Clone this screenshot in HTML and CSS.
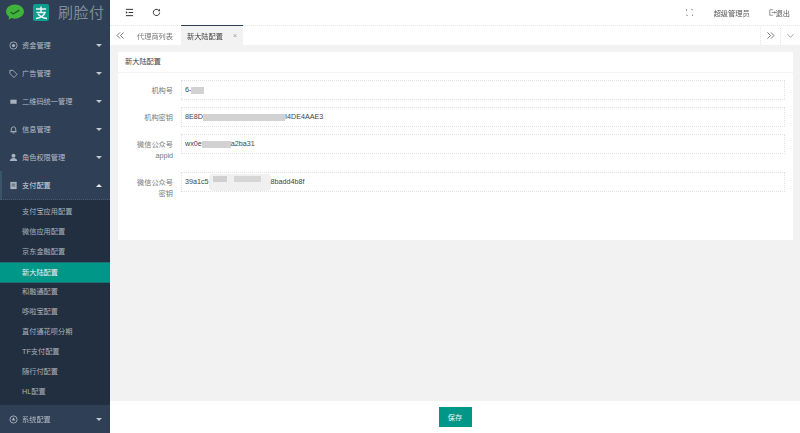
FILE: index.html
```html
<!DOCTYPE html>
<html lang="zh">
<head>
<meta charset="utf-8">
<title>刷脸付</title>
<link rel="stylesheet" href="styles.css">
</head>
<body>
<div class="app">
  <aside class="side">
    <div class="logo">
      <svg class="lg-wx" viewBox="0 0 20 18"><path d="M10 0.500C4.800 0.500 0.500 3.800 0.500 8c0 2.300 1.300 4.300 3.300 5.700L3 16.800l3.500-1.900c1.100.4 2.300.6 3.500.6 5.200 0 9.500-3.400 9.500-7.500S15.200.5 10 .5z" fill="#3fb33a"/><path d="M5.500 8.500l2.500 2 6.500-4" fill="none" stroke="#1e5a2a" stroke-width="1.300"/></svg>
      <svg class="lg-ali" viewBox="0 0 16 17"><rect width="16" height="17" rx="2" fill="#0f9d8f"/><path d="M3 5h10M8 2.500V8M3.500 8.500h8.500c-1 3-4.500 5.500-9 6M5 10c2 2.500 5 4 9 4.500" fill="none" stroke="#e8f6f4" stroke-width="1.500"/></svg>
      <span class="lg-text">刷脸付</span>
    </div>
    <nav class="menu">
      <a class="mi"><svg class="ic" viewBox="0 0 10 10"><circle cx="5" cy="5" r="4" fill="none" stroke="currentColor"/><circle cx="5" cy="5" r="1.800" fill="currentColor"/></svg><span>资金管理</span><i class="car"></i></a>
      <a class="mi"><svg class="ic" viewBox="0 0 10 10"><path d="M1 1.500h3.500l4.500 4.500-3.500 3.500L1 5z" fill="none" stroke="currentColor"/></svg><span>广告管理</span><i class="car"></i></a>
      <a class="mi"><svg class="ic" viewBox="0 0 10 10"><rect x="1.500" y="3" width="7" height="4.500" fill="currentColor"/></svg><span>二维码统一管理</span><i class="car"></i></a>
      <a class="mi"><svg class="ic" viewBox="0 0 10 10"><path d="M2.500 7.500V4.500a2.500 2.500 0 0 1 5 0v3zM1.500 7.500h7M4.200 9h1.600" fill="none" stroke="currentColor"/></svg><span>信息管理</span><i class="car"></i></a>
      <a class="mi"><svg class="ic" viewBox="0 0 10 10"><circle cx="5" cy="3" r="2.200" fill="currentColor"/><path d="M.8 9c.3-2.500 2-3.500 4.200-3.500S8.900 6.500 9.200 9z" fill="currentColor"/></svg><span>角色权限管理</span><i class="car"></i></a>
      <a class="mi open"><svg class="ic" viewBox="0 0 10 10"><rect x="1.500" y="1" width="7" height="8" fill="currentColor"/><path d="M3 3.500h4M3 5.500h4" stroke="#2f4056" stroke-width=".8"/></svg><span>支付配置</span><i class="car up"></i></a>
      <div class="sub">
        <a class="si">支付宝应用配置</a>
        <a class="si">微信应用配置</a>
        <a class="si">京东金融配置</a>
        <a class="si on">新大陆配置</a>
        <a class="si">和融通配置</a>
        <a class="si">哆啦宝配置</a>
        <a class="si">直付通花呗分期</a>
        <a class="si">TF支付配置</a>
        <a class="si">随行付配置</a>
        <a class="si">HL配置</a>
      </div>
      <a class="mi"><svg class="ic" viewBox="0 0 10 10"><circle cx="5" cy="5" r="4" fill="none" stroke="currentColor"/><path d="M5 2.500L7 6H3z" fill="currentColor"/></svg><span>系统配置</span><i class="car"></i></a>
    </nav>
  </aside>
  <main class="main">
    <header class="top">
      <div class="top-l">
        <svg class="ti" viewBox="0 0 10 10"><path d="M1 1.500h8M4 5h5M1 8.500h8" stroke="#333" stroke-width="1.100"/><path d="M1 3.500L3 5 1 6.500z" fill="#333"/></svg>
        <svg class="ti" viewBox="0 0 10 10"><path d="M8.500 5a3.500 3.500 0 1 1-1.200-2.700" fill="none" stroke="#333" stroke-width="1.100"/><path d="M8.800 0.800v2.700H6.100z" fill="#333"/></svg>
      </div>
      <div class="top-r">
        <svg class="fs" viewBox="0 0 8 8"><path d="M0 2.500V0.500H2M6 .5h2v2M8 5.500v2H6M2 7.500H0v-2" fill="none" stroke="#666" stroke-width=".9" stroke-dasharray="1.200 .8"/></svg>
        <span class="admin">超级管理员</span>
        <span class="logout"><svg class="lo" viewBox="0 0 9 9"><path d="M5 1H1v7h4M3.500 4.500H8.500M7 3l1.500 1.500L7 6" fill="none" stroke="#555" stroke-width=".8"/></svg>退出</span>
      </div>
    </header>
    <div class="tabs">
      <span class="tb-btn left"><svg class="ch" viewBox="0 0 10 8"><path d="M4.500.5L1 4l3.500 3.500M8.500.5L5 4l3.500 3.500" fill="none" stroke="#555" stroke-width=".9"/></svg></span>
      <span class="tab">代理商列表</span>
      <span class="tab cur">新大陆配置<em class="x">×</em></span>
      <span class="tb-fill"></span>
      <span class="tb-btn"><svg class="ch" viewBox="0 0 10 8"><path d="M1.500.5L5 4 1.500 7.500M5.500.5L9 4 5.500 7.500" fill="none" stroke="#555" stroke-width=".9"/></svg></span>
      <span class="tb-btn"><svg class="ch" viewBox="0 0 10 8"><path d="M1.500 2.500L5 6l3.500-3.500" fill="none" stroke="#777" stroke-width=".8"/></svg></span>
    </div>
    <section class="body">
      <div class="card">
        <h2 class="card-h">新大陆配置</h2>
        <form class="form">
          <div class="row"><label class="lb">机构号</label><div class="inp">6-<b class="blur w1"></b></div></div>
          <div class="row"><label class="lb">机构密钥</label><div class="inp">8E8D<b class="blur w2"></b>I4DE4AAE3</div></div>
          <div class="row"><label class="lb">微信公众号<br>appid</label><div class="inp">wx0e<b class="blur w3"></b>a2ba31</div></div>
          <div class="row"><label class="lb">微信公众号<br>密钥</label><div class="inp">39a1c5<b class="blur w4"></b>8badd4b8f</div></div>
        </form>
      </div>
    </section>
    <footer class="foot"><button class="save" type="button">保存</button></footer>
  </main>
</div>
</body>
</html>
```
FILE: styles.css
```css
* { box-sizing: border-box; }
html, body { margin: 0; height: 100%; }
body { font-family: "Liberation Sans", "Noto Sans CJK SC", sans-serif; font-size: 7.2px; color: #555; overflow: hidden; background: #fff; }
.app { display: flex; width: 800px; height: 433px; filter: blur(.3px); }

.side { width: 110px; flex: none; background: #2f3f55; color: #b4bcc6; display: flex; flex-direction: column; }
.logo { height: 31px; flex: none; display: flex; align-items: flex-start; padding: 4px 0 0 5px; }
.lg-wx { width: 20px; height: 17px; }
.lg-ali { width: 16px; height: 17px; margin-left: 8px; }
.lg-text { margin-left: 9px; font-size: 15px; line-height: 17px; color: #7f8b99; letter-spacing: .5px; }

.menu { display: flex; flex-direction: column; flex: 1; }
.mi { height: 28px; flex: none; display: flex; align-items: center; padding: 0 6px 0 9px; }
.mi span { flex: 1; margin-left: 4px; }
.mi.open { color: #d5d9df; height: 29px; border-bottom: 1px dotted #4a5868; box-shadow: inset 2px 0 0 #3a5565; }
.ic { width: 9px; height: 9px; flex: none; color: #aab2bd; }
.car { width: 0; height: 0; border: 3px solid transparent; border-top: 3px solid #c2c8d0; border-bottom: 0; margin-right: 2px; }
.car.up { border-top: 0; border-bottom: 3px solid #e8eaee; }
.sub { background: #222f40; display: flex; flex-direction: column; height: 205px; padding-top: 2px; flex: none; }
.si { height: 20px; line-height: 20px; padding-left: 22px; color: #aab2bd; flex: none; }
.si.on { background: #009688; color: #eef; height: 21px; border-top: 1px solid #1c6f70; border-bottom: 1px solid #1c6f70; line-height: 19px; margin-bottom: -1px; }

.main { flex: 1; min-width: 0; display: flex; flex-direction: column; }
.top { height: 25px; flex: none; display: flex; align-items: center; justify-content: space-between; padding: 0 10px 0 15px; background: #fff; }
.top-l { display: flex; gap: 18px; }
.ti { width: 9px; height: 9px; }
.top-r { display: flex; align-items: center; }
.fs { width: 7px; height: 7px; margin-right: 21px; }
.admin { color: #555; margin-right: 19px; }
.logout { display: flex; align-items: center; color: #555; }
.lo { width: 7px; height: 7px; }

.tabs { height: 20px; flex: none; display: flex; align-items: stretch; background: #fff; border-top: 1px dotted #e8e8e8; }
.tb-btn { width: 20px; display: flex; align-items: center; justify-content: center; border-left: 1px dotted #e8e8e8; }
.tb-btn.left { width: 20px; border-left: 0; }
.ch { width: 9px; height: 7px; }
.tab { padding: 0 8px 0 7px; display: flex; align-items: center; color: #777; }
.tab.cur { background: #f2f2f2; border-top: 1px solid #2f4056; margin-top: -1px; color: #444; padding: 0 6px 0 6px; }
.x { font-style: normal; color: #999; margin-left: 10px; }
.tb-fill { flex: 1; }

.body { flex: 1; background: #f2f2f2; padding: 7px 7px 0 8px; min-height: 0; }
.card { background: #fff; height: 188px; }
.card-h { margin: 0; height: 21px; line-height: 20px; padding-left: 7px; font-size: 7.2px; font-weight: 400; color: #444; border-bottom: 1px solid #f4f4f4; }
.form { padding: 7px 8px 0 0; display: flex; flex-direction: column; gap: 6px; }
.row { display: flex; align-items: flex-start; min-height: 21px; }
.row:nth-child(3) { min-height: 32px; }
.row:nth-child(4) { min-height: 24px; }
.lb { width: 55px; flex: none; text-align: right; line-height: 11px; padding-top: 5px; color: #777; }
.inp { flex: 1; margin-left: 8px; height: 20px; border: 1px dotted #e2e2e2; padding-left: 3px; line-height: 18px; color: #444; display: flex; align-items: center; white-space: pre; font-size: 7.2px; }
.blur { display: inline-block; height: 7px; background: #d2d2d2; }
.w1 { width: 13px; }
.w2 { width: 82px; }
.w3 { width: 29px; }
.w4 { width: 62px; height: 17px; border-radius: 4px; background-color: #f0f0f0; background-image: linear-gradient(#d0d0d0, #d0d0d0), linear-gradient(#d6d6d6, #d6d6d6); background-repeat: no-repeat; background-size: 14px 6px, 27px 6px; background-position: 4px 2px, 25px 2px; }

.foot { height: 32px; flex: none; display: flex; justify-content: center; align-items: center; background: #fff; }
.save { width: 33px; height: 20px; border: 0; padding: 0; background: #009688; color: #e9f5f4; font: inherit; font-size: 7.2px; }
```
